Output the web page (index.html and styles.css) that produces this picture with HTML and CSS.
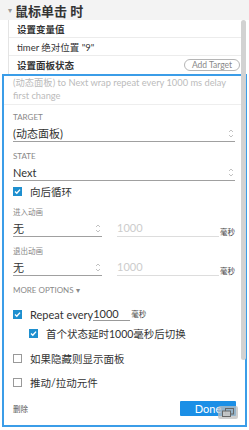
FILE: index.html
```html
<!DOCTYPE html>
<html lang="zh">
<head>
    <meta charset="UTF-8">
    <meta name="viewport" content="width=device-width, initial-scale=1.0">
    <title>Interactions</title>
    <link rel="stylesheet" href="styles.css">
</head>
<body>
    <div class="event-head">
        <span class="caret">▾</span>
        <span class="event-title">鼠标单击 时</span>
    </div>

    <div class="actions">
        <div class="action-row bold">设置变量值</div>
        <div class="action-row">timer 绝对位置 "9"</div>
        <div class="action-row bold">
            设置面板状态
            <button class="add-target">Add Target</button>
        </div>
    </div>

    <div class="editor">
        <div class="summary">(动态面板) to Next wrap repeat every 1000 ms delay first change</div>

        <div class="fields">
            <div class="field-label first">Target</div>
            <div class="select-row">
                <span>(动态面板)</span>
                <svg class="chev" width="6" height="11" viewBox="0 0 6 11"><path d="M1 4 L3 2 L5 4 M1 7 L3 9 L5 7" fill="none" stroke="#bbb" stroke-width="0.9"/></svg>
            </div>

            <div class="field-label">State</div>
            <div class="select-row">
                <span>Next</span>
                <svg class="chev" width="6" height="11" viewBox="0 0 6 11"><path d="M1 4 L3 2 L5 4 M1 7 L3 9 L5 7" fill="none" stroke="#bbb" stroke-width="0.9"/></svg>
            </div>

            <label class="check-row wrap-row">
                <span class="check on"><svg width="9" height="9" viewBox="0 0 9 9"><path d="M2 4.6 L3.8 6.3 L7 2.6" fill="none" stroke="#fff" stroke-width="1.4"/></svg></span>
                向后循环
            </label>

            <div class="field-label anim-label">进入动画</div>
            <div class="anim-row">
                <div class="select-row short">
                    <span>无</span>
                    <svg class="chev" width="6" height="11" viewBox="0 0 6 11"><path d="M1 4 L3 2 L5 4 M1 7 L3 9 L5 7" fill="none" stroke="#bbb" stroke-width="0.9"/></svg>
                </div>
                <div class="ms-input">1000</div>
                <span class="unit">毫秒</span>
            </div>

            <div class="field-label anim-label">退出动画</div>
            <div class="anim-row">
                <div class="select-row short">
                    <span>无</span>
                    <svg class="chev" width="6" height="11" viewBox="0 0 6 11"><path d="M1 4 L3 2 L5 4 M1 7 L3 9 L5 7" fill="none" stroke="#bbb" stroke-width="0.9"/></svg>
                </div>
                <div class="ms-input">1000</div>
                <span class="unit">毫秒</span>
            </div>

            <div class="more-options">MORE OPTIONS ▾</div>

            <div class="check-row repeat-row">
                <span class="check on"><svg width="9" height="9" viewBox="0 0 9 9"><path d="M2 4.6 L3.8 6.3 L7 2.6" fill="none" stroke="#fff" stroke-width="1.4"/></svg></span>
                <span>Repeat every</span>
                <span class="repeat-input">1000</span>
                <span class="unit">毫秒</span>
            </div>

            <div class="check-row nested">
                <span class="check on"><svg width="9" height="9" viewBox="0 0 9 9"><path d="M2 4.6 L3.8 6.3 L7 2.6" fill="none" stroke="#fff" stroke-width="1.4"/></svg></span>
                首个状态延时1000毫秒后切换
            </div>

            <div class="check-row show-row">
                <span class="check"></span>
                如果隐藏则显示面板
            </div>

            <div class="check-row push-row">
                <span class="check"></span>
                推动/拉动元件
            </div>

            <div class="footer">
                <span class="delete">删除</span>
                <button class="done">Done</button>
            </div>
        </div>
    </div>

    <div class="scroll-thumb"></div>

    <div class="float-icon">
        <svg width="12" height="9" viewBox="0 0 12 9"><rect x="3.5" y="0.5" width="8" height="5.5" fill="none" stroke="#666"/><rect x="0.5" y="3" width="8" height="5.5" fill="rgba(200,200,200,0.9)" stroke="#666"/></svg>
    </div>
</body>
</html>
```

FILE: styles.css
```css
body {
    margin: 0;
    width: 249px;
    height: 430px;
    overflow: hidden;
    position: relative;
    background: #fff;
    color: #333;
    font-family: Lato, "Noto Sans CJK SC", sans-serif;
}

.event-head {
    height: 20px;
    background: #f3f3f3;
    display: flex;
    align-items: center;
    padding-left: 8px;
}

.caret {
    font-size: 8px;
    color: #999;
    margin-right: 3px;
}

.event-title {
    font-size: 13px;
    font-weight: bold;
    color: #333;
}

.actions {
    margin-left: 8px;
    width: 233px;
    border-left: 1px solid #e4e4e4;
}

.action-row {
    box-sizing: border-box;
    height: 18px;
    padding-left: 8px;
    display: flex;
    align-items: center;
    font-size: 9.5px;
    border-bottom: 1px solid #ececec;
}

.action-row:last-child {
    border-bottom: none;
}

.bold {
    font-weight: bold;
}

.add-target {
    margin-left: auto;
    margin-right: 2px;
    width: 56px;
    height: 12px;
    padding: 0;
    border: 1px solid #b5b5b5;
    border-radius: 6px;
    background: #fff;
    color: #888;
    font-family: Lato, sans-serif;
    font-size: 8.5px;
    line-height: 10px;
}

.editor {
    margin-left: 2px;
    width: 245px;
    box-sizing: border-box;
    border: 2px solid #3b9de8;
}

.summary {
    padding: 0 12px 2px 9px;
    font-size: 9.3px;
    line-height: 13px;
    color: #bbb;
    border-bottom: 1px solid #eee;
}

.fields {
    padding: 0 10px 9px 9px;
}

.field-label {
    font-size: 8px;
    line-height: 10px;
    color: #888;
    text-transform: uppercase;
    margin-top: 9px;
    margin-bottom: 3px;
}

.field-label.first {
    margin-top: 7px;
}

.anim-label {
    font-size: 7.5px;
    margin-top: 10px;
    margin-bottom: 2px;
}

.select-row {
    height: 16px;
    display: flex;
    align-items: center;
    justify-content: space-between;
    font-size: 11px;
    border-bottom: 1px solid #a0a0a0;
}

.chev {
    margin-right: 1px;
}

.check-row {
    height: 14px;
    display: flex;
    align-items: center;
    font-size: 10.5px;
    color: #333;
}

.check {
    box-sizing: border-box;
    width: 9px;
    height: 9px;
    margin-right: 8px;
    border: 1px solid #999;
    background: #fff;
    flex-shrink: 0;
}

.check.on {
    border: none;
    background: #1e8fcf;
}

.check svg {
    display: block;
}

.wrap-row {
    margin-top: 3px;
}

.anim-row {
    display: flex;
    align-items: flex-end;
}

.select-row.short {
    width: 89px;
    flex-shrink: 0;
}

.ms-input {
    flex: 1;
    margin-left: 15px;
    height: 16px;
    line-height: 16px;
    font-size: 11px;
    color: #ccc;
    border-bottom: 1px solid #ddd;
}

.unit {
    flex-shrink: 0;
    white-space: nowrap;
    font-size: 7.5px;
    line-height: 10px;
    margin-left: 1px;
    margin-bottom: -1px;
    color: #444;
}

.more-options {
    margin-top: 9px;
    font-size: 8px;
    line-height: 10px;
    color: #888;
}

.repeat-row {
    margin-top: 12px;
    font-size: 11px;
}

.repeat-input {
    box-sizing: border-box;
    width: 37px;
    height: 14px;
    line-height: 13px;
    font-size: 11px;
    border-bottom: 1px solid #999;
}

.repeat-row .unit {
    align-self: flex-end;
    margin-bottom: 1px;
}

.nested {
    margin-top: 5px;
    padding-left: 16px;
}

.show-row {
    margin-top: 11px;
}

.push-row {
    margin-top: 10px;
}

.footer {
    margin-top: 12px;
    height: 15px;
    display: flex;
    align-items: center;
    justify-content: space-between;
}

.delete {
    font-size: 7.5px;
    color: #555;
}

.done {
    width: 56px;
    height: 15px;
    margin-right: -1px;
    padding: 0;
    border: none;
    border-radius: 1px;
    background: #1b8fe6;
    color: #fff;
    font-family: Lato, sans-serif;
    font-size: 11px;
}

.scroll-thumb {
    position: absolute;
    left: 241px;
    top: 20px;
    width: 5px;
    height: 340px;
    background: #d2d2d2;
    border-radius: 3px;
}

.float-icon {
    position: absolute;
    left: 218px;
    top: 406px;
    width: 20px;
    height: 13px;
    border-radius: 2px;
    background: rgba(190, 190, 190, 0.75);
    display: flex;
    align-items: center;
    justify-content: center;
}
```
